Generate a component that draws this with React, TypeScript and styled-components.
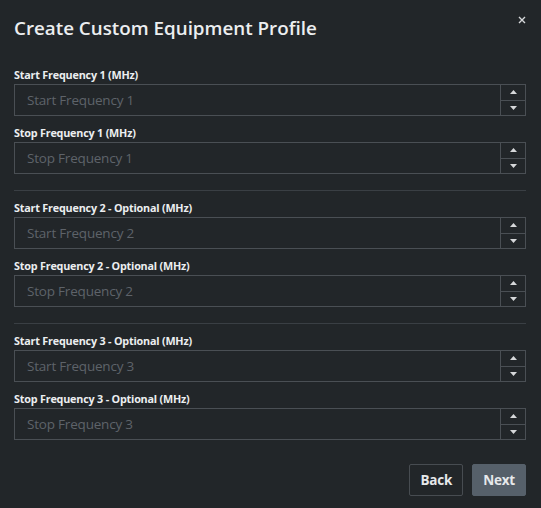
import React from "react";
import styled, { createGlobalStyle } from "styled-components";

const GlobalStyle = createGlobalStyle`
  html, body {
    margin: 0;
    padding: 0;
    background: #222629;
  }
  body {
    font-family: "Open Sans", "Noto Sans", sans-serif;
    color: #e6e8ea;
  }
`;

const Modal = styled.div`
  position: relative;
  width: 541px;
  height: 508px;
  box-sizing: border-box;
  padding: 0 15px 0 14px;
  display: flex;
  flex-direction: column;
`;

const Title = styled.h1`
  margin: 0;
  padding-top: 15px;
  height: 51px;
  box-sizing: border-box;
  font-size: 18.8px;
  font-weight: 600;
  line-height: 26px;
  color: #eceef0;
`;

const CloseButton = styled.button`
  position: absolute;
  top: 14px;
  right: 13px;
  width: 12px;
  height: 12px;
  padding: 0;
  border: none;
  background: transparent;
  display: flex;
  align-items: center;
  justify-content: center;
  cursor: pointer;
`;

const Group = styled.div<{ first?: boolean }>`
  display: flex;
  flex-direction: column;
  margin-top: ${(p) => (p.first ? "15px" : "8px")};
`;

const Label = styled.label`
  font-size: 10.8px;
  font-weight: 700;
  line-height: 18px;
  color: #eceef0;
  letter-spacing: -0.2px;
`;

const Field = styled.div`
  display: flex;
  height: 32px;
  box-sizing: border-box;
  border: 1px solid #4a4f54;
  background: #222629;
`;

const Input = styled.input`
  flex: 1;
  min-width: 0;
  border: none;
  outline: none;
  background: transparent;
  padding: 0 12px;
  font-family: inherit;
  font-size: 13.5px;
  color: #e6e8ea;
  letter-spacing: -0.2px;
  &::placeholder {
    color: #5e6369;
  }
`;

const Spinner = styled.div`
  width: 24px;
  display: flex;
  flex-direction: column;
  border-left: 1px solid #4a4f54;
`;

const SpinButton = styled.button<{ down?: boolean }>`
  flex: 1;
  padding: 0;
  border: none;
  border-top: ${(p) => (p.down ? "1px solid #4a4f54" : "none")};
  background: transparent;
  display: flex;
  align-items: center;
  justify-content: center;
  cursor: pointer;
`;

const Divider = styled.hr`
  margin: 16px 0 0;
  border: none;
  border-top: 1px solid #3a3f44;
`;

const Footer = styled.div`
  margin-top: auto;
  margin-bottom: 12px;
  display: flex;
  justify-content: flex-end;
  gap: 9px;
`;

const Button = styled.button<{ primary?: boolean }>`
  height: 32px;
  padding: 0 10px;
  font-family: inherit;
  font-size: 13.5px;
  font-weight: 700;
  letter-spacing: -0.2px;
  color: #e6e8ea;
  border: 1px solid ${(p) => (p.primary ? "#56606a" : "#474c51")};
  background: ${(p) => (p.primary ? "#56606a" : "transparent")};
  border-radius: 2px;
  cursor: pointer;
`;

const Triangle = ({ down }: { down?: boolean }) => (
  <svg width="7" height="4" viewBox="0 0 7 4">
    <path
      d={down ? "M0 0 H7 L3.5 4 Z" : "M3.5 0 L7 4 H0 Z"}
      fill="#d6d8da"
    />
  </svg>
);

const fields = [
  { label: "Start Frequency 1 (MHz)", placeholder: "Start Frequency 1" },
  { label: "Stop Frequency 1 (MHz)", placeholder: "Stop Frequency 1" },
  { label: "Start Frequency 2 - Optional (MHz)", placeholder: "Start Frequency 2" },
  { label: "Stop Frequency 2 - Optional (MHz)", placeholder: "Stop Frequency 2" },
  { label: "Start Frequency 3 - Optional (MHz)", placeholder: "Start Frequency 3" },
  { label: "Stop Frequency 3 - Optional (MHz)", placeholder: "Stop Frequency 3" },
];

function NumberField({ label, placeholder, first }: { label: string; placeholder: string; first?: boolean }) {
  return (
    <Group first={first}>
      <Label>{label}</Label>
      <Field>
        <Input type="text" placeholder={placeholder} />
        <Spinner>
          <SpinButton aria-label="increase">
            <Triangle />
          </SpinButton>
          <SpinButton down aria-label="decrease">
            <Triangle down />
          </SpinButton>
        </Spinner>
      </Field>
    </Group>
  );
}

export default function App() {
  return (
    <>
      <GlobalStyle />
      <Modal>
        <Title>Create Custom Equipment Profile</Title>
        <CloseButton aria-label="close">
          <svg width="8" height="8" viewBox="0 0 8 8">
            <path d="M1 1 L7 7 M7 1 L1 7" stroke="#d6d8da" strokeWidth="1.4" />
          </svg>
        </CloseButton>
        {fields.map((f, i) => (
          <React.Fragment key={f.label}>
            {i > 0 && i % 2 === 0 && <Divider />}
            <NumberField label={f.label} placeholder={f.placeholder} first={i === 0} />
          </React.Fragment>
        ))}
        <Footer>
          <Button>Back</Button>
          <Button primary>Next</Button>
        </Footer>
      </Modal>
    </>
  );
}
